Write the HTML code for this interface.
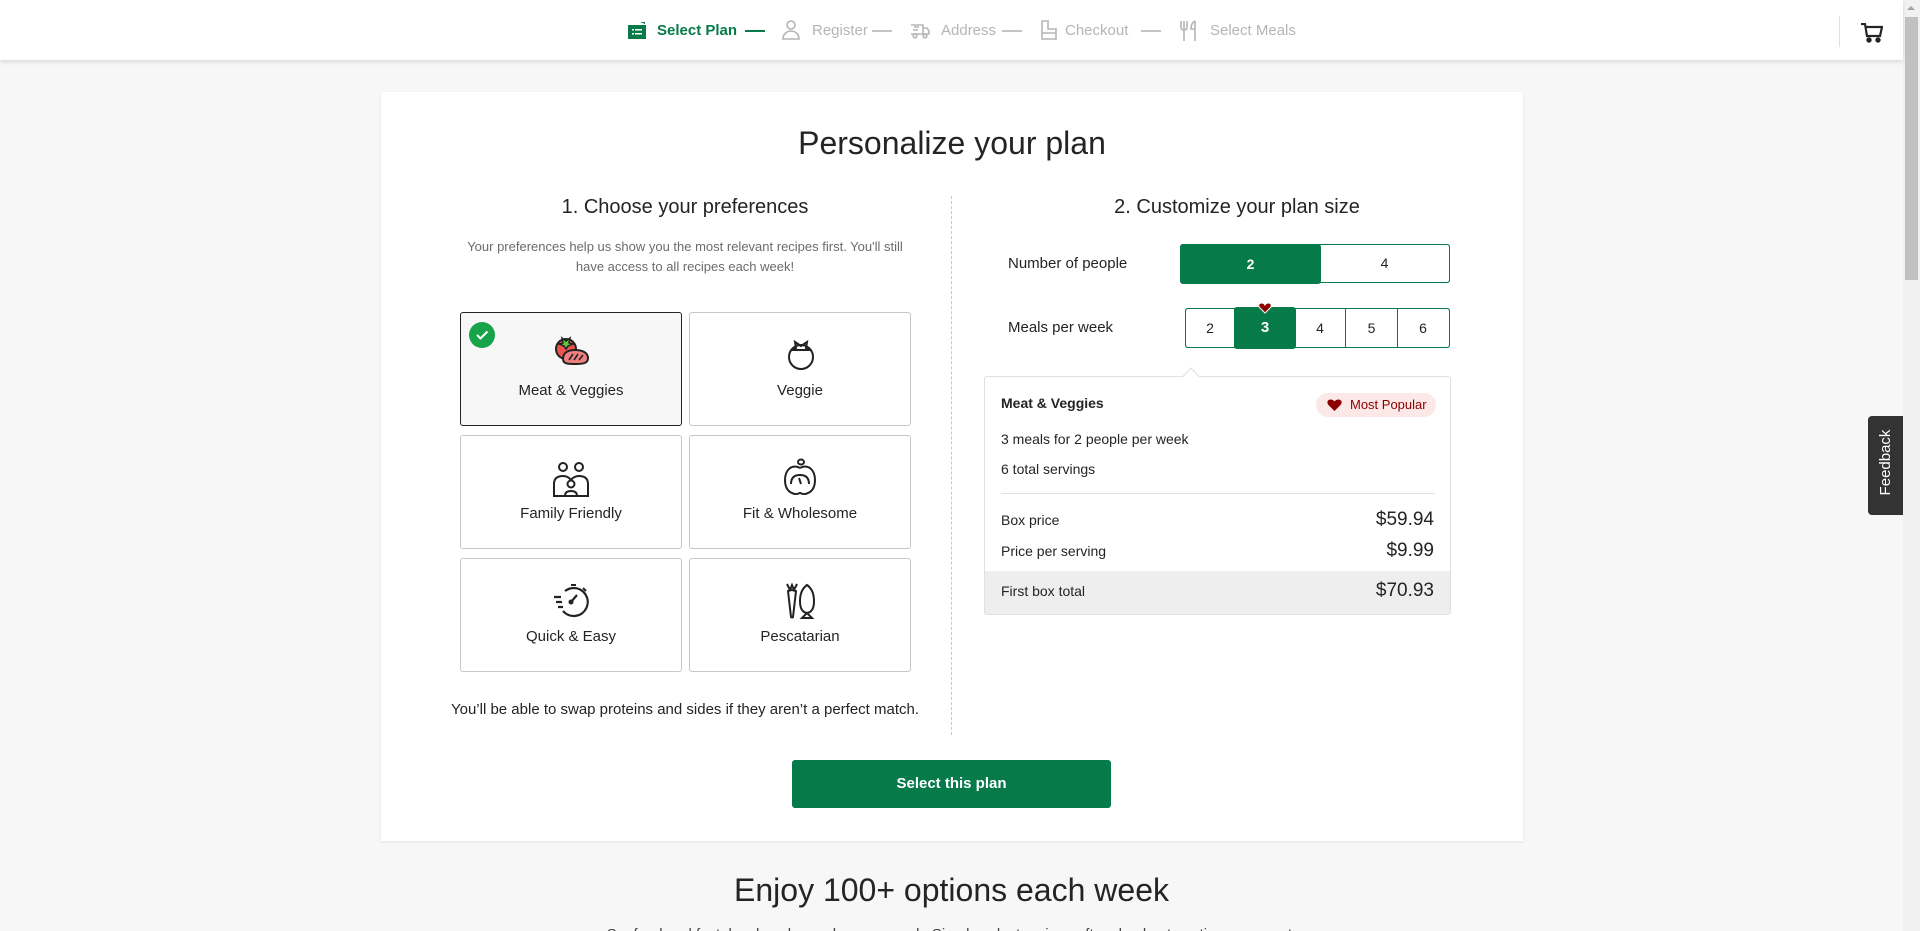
<!DOCTYPE html>
<html><head><meta charset="utf-8"><style>
*{box-sizing:border-box;margin:0;padding:0}
html,body{width:1920px;height:931px;overflow:hidden}
body{background:#f7f7f7;font-family:"Liberation Sans",sans-serif;color:#242424;position:relative}
.abs{position:absolute}
.hdr{left:0;top:0;width:1903px;height:60px;background:#fff;box-shadow:0 2px 4px rgba(0,0,0,.12);z-index:2}
.step{position:absolute;top:22px;font-size:15px;color:#b5b5b5;white-space:nowrap}
.dash{position:absolute;top:30px;height:2px;width:20px;background:#c4c4c4}
.sb{left:1903px;top:0;width:17px;height:931px;background:#f1f1f1}
.card{left:381px;top:92px;width:1142px;height:749px;background:#fff;box-shadow:0 1px 3px rgba(0,0,0,.08)}
.h1{width:100%;text-align:center;font-size:32px;color:#242424}
.tile{position:absolute;width:222px;height:114px;border:1px solid #c8c8c8;border-radius:3px;background:#fff;text-align:center;font-size:15px}
.tile span{position:absolute;left:0;right:0;top:69px}
.tile .ic{position:absolute;left:91px;top:24px}
.seg{position:absolute;border:1px solid #077a4a;text-align:center;font-size:14px;color:#242424}
.lbl{position:absolute;font-size:15px;color:#242424}
</style></head><body>
<div class="abs hdr">
  <svg class="abs" style="left:628px;top:21px" width="18" height="18" viewBox="0 0 18 18"><path d="M12 1l5 0 0 2z" fill="#077a4a"/><rect x="0" y="4" width="18" height="14" fill="#077a4a"/><rect x="4" y="8" width="2" height="1.5" fill="#fff"/><rect x="7" y="8" width="7" height="1.5" fill="#fff"/><rect x="4" y="12" width="2" height="1.5" fill="#fff"/><rect x="7" y="12" width="7" height="1.5" fill="#fff"/></svg>
  <div class="step" style="left:657px;color:#077a4a;font-weight:bold">Select Plan</div>
  <div class="dash" style="left:745px;background:#077a4a"></div>
  <svg class="abs" style="left:782px;top:20px" width="18" height="20" viewBox="0 0 18 20" fill="none" stroke="#b5b5b5" stroke-width="1.6"><circle cx="9" cy="5" r="4"/><path d="M1 19c0-5 4-8 8-8s8 3 8 8z"/></svg>
  <div class="step" style="left:812px">Register</div>
  <div class="dash" style="left:872px"></div>
  <svg class="abs" style="left:910px;top:21px" width="20" height="18" viewBox="0 0 20 18" fill="none" stroke="#b5b5b5" stroke-width="1.6"><path d="M1 4h12v9H1M13 7h4l2 3v3h-6M4 6h5M3 9h5"/><circle cx="5" cy="15" r="1.8"/><circle cx="15" cy="15" r="1.8"/></svg>
  <div class="step" style="left:941px">Address</div>
  <div class="dash" style="left:1002px"></div>
  <svg class="abs" style="left:1041px;top:20px" width="16" height="20" viewBox="0 0 16 20" fill="none" stroke="#b5b5b5" stroke-width="1.6"><path d="M1 1h6v8h8v10H1zM1 13h14"/></svg>
  <div class="step" style="left:1065px">Checkout</div>
  <div class="dash" style="left:1141px"></div>
  <svg class="abs" style="left:1180px;top:20px" width="18" height="22" viewBox="0 0 18 22" fill="none" stroke="#b5b5b5" stroke-width="1.6"><path d="M1 1v6q0 3 3 3t3-3V1M4 1v20M15 1v20M15 1q-4 2-4 8h4"/></svg>
  <div class="step" style="left:1210px">Select Meals</div>
  <div class="abs" style="left:1839px;top:16px;width:1px;height:31px;background:#e0e0e0"></div>
  <svg class="abs" style="left:1861px;top:23px" width="22" height="20" viewBox="0 0 22 20" fill="none" stroke="#242424" stroke-width="2.2"><path d="M0 1h4l2 12h13l2-9H5"/><circle cx="8" cy="17" r="1.6" fill="#242424"/><circle cx="17" cy="17" r="1.6" fill="#242424"/></svg>
</div>
<div class="abs sb"><div class="abs" style="left:2px;top:17px;width:13px;height:263px;background:#c1c1c1"></div><div class="abs" style="left:4px;top:6px;width:0;height:0;border-left:4px solid transparent;border-right:4px solid transparent;border-bottom:4px solid #a3a3a3"></div></div>

<div class="abs card">
  <div class="abs h1" style="top:33px">Personalize your plan</div>
  <div class="abs" style="left:570px;top:104px;width:0;height:539px;border-left:1px dashed #c8c8c8"></div>
  <div class="abs" style="left:0;width:608px;top:104px;text-align:center;font-size:20px">1. Choose your preferences</div>
  <div class="abs" style="left:84px;width:440px;top:145px;text-align:center;font-size:13px;line-height:20px;color:#6b6b6b">Your preferences help us show you the most relevant recipes first. You'll still have access to all recipes each week!</div>

  <div class="tile" style="left:79px;top:220px;background:#f7f7f7;border:1px solid #242424">
    <svg class="abs" style="left:8px;top:9px" width="26" height="26" viewBox="0 0 26 26"><circle cx="13" cy="13" r="13" fill="#16a34a"/><path d="M8 13l3.5 3.5 7-7" stroke="#fff" stroke-width="2" fill="none"/></svg>
    <svg class="ic" width="36" height="34" viewBox="0 0 36 34" style="left:93px;top:22px"><circle cx="12" cy="14" r="10" fill="#ef5350" stroke="#222" stroke-width="2"/><path d="M8 3l4 3 4-3-1 5 4 1-5 2-2 3-2-3-5-2 4-1z" fill="#5ecb3a" stroke="#222" stroke-width="1.5"/><path d="M9 24c0-7 6-9 12-9 8 0 13 3 13 8 0 5-4 6-12 6-8 0-13 0-13-5z" fill="#f08080" stroke="#222" stroke-width="2"/><path d="M15 25l4-6M20 25l4-6M25 25l4-5" stroke="#222" stroke-width="1.6"/></svg>
    <span>Meat &amp; Veggies</span></div>
  <div class="tile" style="left:308px;top:220px">
    <svg class="ic" width="30" height="32" viewBox="0 0 30 32" style="left:96px;top:26px"><circle cx="15" cy="18" r="12" fill="none" stroke="#222" stroke-width="2"/><path d="M9 3l6 4 6-4-1 6 3 2-8 0-8 0 3-2z" fill="none" stroke="#222" stroke-width="2"/></svg>
    <span>Veggie</span></div>
  <div class="tile" style="left:79px;top:343px">
    <svg class="ic" width="36" height="36" viewBox="0 0 36 36" style="left:92px;top:26px"><circle cx="10" cy="5" r="4" fill="none" stroke="#222" stroke-width="2"/><circle cx="26" cy="5" r="4" fill="none" stroke="#222" stroke-width="2"/><path d="M1 34V22q0-8 9-8 5 0 8 4 3-4 8-4 9 0 9 8v12zM12 34q0-5 6-5t6 5" fill="none" stroke="#222" stroke-width="2"/><circle cx="18" cy="22" r="3.5" fill="none" stroke="#222" stroke-width="2"/></svg>
    <span>Family Friendly</span></div>
  <div class="tile" style="left:308px;top:343px">
    <svg class="ic" width="32" height="38" viewBox="0 0 32 38" style="left:94px;top:22px"><ellipse cx="17" cy="4" rx="3" ry="2.5" fill="none" stroke="#222" stroke-width="2"/><path d="M16 10q-5-3-10 0-5 4-5 12 0 12 10 14 5 0 5-2 0 2 5 2 10-2 10-14 0-8-5-12-5-3-10 0" fill="none" stroke="#222" stroke-width="2"/><path d="M7 26q0-9 9-9t9 9" fill="none" stroke="#222" stroke-width="2"/><path d="M15 20l2 6" stroke="#222" stroke-width="2"/></svg>
    <span>Fit &amp; Wholesome</span></div>
  <div class="tile" style="left:79px;top:466px">
    <svg class="ic" width="36" height="36" viewBox="0 0 36 36" style="left:92px;top:24px"><path d="M12 8q4-3 9-3a14 14 0 1 1-11 23" fill="none" stroke="#222" stroke-width="2.2"/><path d="M18 2h5M30 5l3 3" stroke="#222" stroke-width="2"/><path d="M1 14h7M3 19h6M5 24h5" stroke="#222" stroke-width="2.2"/><circle cx="18" cy="19" r="2.5" fill="#222"/><path d="M18 19l6-7" stroke="#222" stroke-width="2.2"/></svg>
    <span>Quick &amp; Easy</span></div>
  <div class="tile" style="left:308px;top:466px">
    <svg class="ic" width="32" height="36" viewBox="0 0 32 36" style="left:95px;top:24px"><path d="M2 1l3 6 2-5 2 5 3-6M3 8q3-2 8 0l-3 26q-1 1-2 0z" fill="none" stroke="#222" stroke-width="2"/><path d="M22 2q7 5 7 16t-7 12q-7-1-7-12t7-16zM22 30l-5 5h10z" fill="none" stroke="#222" stroke-width="2"/></svg>
    <span>Pescatarian</span></div>
  <div class="abs" style="left:0;width:608px;top:609px;text-align:center;font-size:15px">You’ll be able to swap proteins and sides if they aren’t a perfect match.</div>

  <div class="abs" style="left:570px;width:572px;top:104px;text-align:center;font-size:20px">2. Customize your plan size</div>
  <div class="lbl" style="left:627px;top:163px">Number of people</div>
  <div class="seg" style="left:799px;top:152px;width:270px;height:39px;border-radius:3px"></div>
  <div class="seg" style="left:799px;top:152px;width:141px;height:40px;background:#077a4a;color:#fff;font-weight:bold;border-radius:3px;line-height:38px">2</div>
  <div class="seg" style="left:939px;top:152px;width:130px;height:39px;border-left:none;border-radius:0 3px 3px 0;line-height:37px">4</div>

  <div class="lbl" style="left:627px;top:227px">Meals per week</div>
  <div class="seg" style="left:804px;top:216px;width:265px;height:40px;border-radius:3px"></div>
  <div class="seg" style="left:804px;top:216px;width:50px;height:40px;line-height:38px;border-radius:3px 0 0 3px">2</div>
  <div class="seg" style="left:914px;top:216px;width:51px;height:40px;line-height:38px;border-left:none">4</div>
  <div class="seg" style="left:964px;top:216px;width:53px;height:40px;line-height:38px">5</div>
  <div class="seg" style="left:1016px;top:216px;width:53px;height:40px;line-height:38px;border-left:none;border-radius:0 3px 3px 0">6</div>
  <div class="seg" style="left:853px;top:215px;width:62px;height:42px;line-height:40px;background:#077a4a;color:#fff;font-weight:bold;border-radius:3px;font-size:15px">3</div>
  <svg class="abs" style="left:877px;top:210px" width="14" height="12" viewBox="0 0 14 12"><path d="M7 11L1 5Q0 1 3.5 1 6 1 7 3 8 1 10.5 1 14 1 13 5z" fill="#8b0000" stroke="#fff" stroke-width="1"/></svg>

  <div class="abs" style="left:603px;top:284px;width:467px;height:239px;border:1px solid #e0e0e0;border-radius:3px;background:#fff;overflow:hidden">
    <div class="abs" style="left:0;top:194px;width:467px;height:45px;background:#eeeeee"></div>
    <div class="abs" style="left:16px;top:116px;width:434px;height:1px;background:#e0e0e0"></div>
    <div class="abs" style="left:16px;top:18px;font-size:14px;font-weight:bold">Meat &amp; Veggies</div>
    <div class="abs" style="left:331px;top:16px;width:120px;height:24px;border-radius:12px;background:#fde8e8;font-size:13px;color:#8b0000;line-height:24px;padding-left:34px">Most Popular</div>
    <svg class="abs" style="left:342px;top:22px" width="15" height="12" viewBox="0 0 15 12"><path d="M7.5 12L1 5.5Q-1 1 3.5 0.5 6 0.5 7.5 2.5 9 0.5 11.5 0.5 16 1 14 5.5z" fill="#8b0000"/></svg>
    <div class="abs" style="left:16px;top:54px;font-size:14px">3 meals for 2 people per week</div>
    <div class="abs" style="left:16px;top:84px;font-size:14px">6 total servings</div>
    <div class="abs" style="left:16px;top:135px;font-size:14px">Box price</div>
    <div class="abs" style="right:16px;top:132px;font-size:19px">$59.94</div>
    <div class="abs" style="left:16px;top:166px;font-size:14px">Price per serving</div>
    <div class="abs" style="right:16px;top:163px;font-size:19px">$9.99</div>
    <div class="abs" style="left:16px;top:206px;font-size:14px">First box total</div>
    <div class="abs" style="right:16px;top:203px;font-size:19px">$70.93</div>
  </div>
  <div class="abs" style="left:804px;top:278px;width:12px;height:12px;background:#fff;border-left:1px solid #e0e0e0;border-top:1px solid #e0e0e0;transform:rotate(45deg)"></div>

  <div class="abs" style="left:411px;top:668px;width:319px;height:48px;background:#077a4a;border-radius:3px;color:#fff;font-weight:bold;font-size:15px;text-align:center;line-height:48px">Select this plan</div>
</div>

<div class="abs" style="left:0;width:1903px;top:872px;text-align:center;font-size:32px">Enjoy 100+ options each week</div>
<div class="abs" style="left:0;width:1903px;top:926px;text-align:center;font-size:15px;color:#444">Seafood and fast, low-hassle meals every week. Simply select recipes after checkout anytime you want.</div>

<div class="abs" style="left:1868px;top:416px;width:35px;height:99px;background:#333;border-radius:4px 0 0 4px"><div class="abs" style="left:-32px;top:38px;width:99px;text-align:center;color:#fff;font-size:15px;transform:rotate(-90deg)">Feedback</div></div>
</body></html>
